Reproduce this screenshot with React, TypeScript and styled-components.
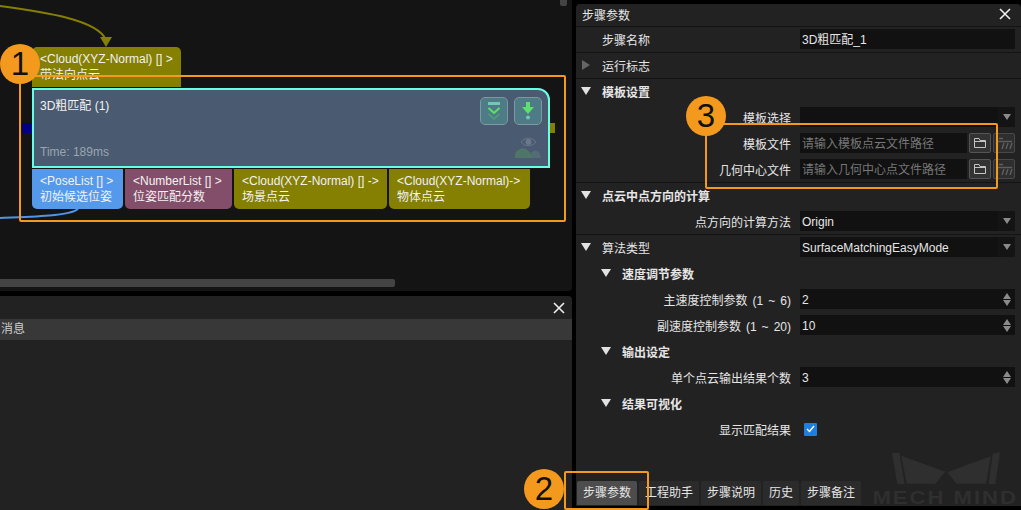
import React from "react";
import styled, { createGlobalStyle } from "styled-components";

const orange = "#f39a1e";
const olive = "#857f02";

const GlobalStyle = createGlobalStyle`
  html, body {
    margin: 0;
    padding: 0;
    background: #000;
    overflow: hidden;
  }
  * {
    box-sizing: border-box;
  }
  body {
    font-family: "Liberation Sans", "Noto Sans CJK SC", sans-serif;
    font-size: 12px;
    color: #e6e6e6;
  }
`;

const Page = styled.div`
  position: relative;
  width: 1021px;
  height: 510px;
  display: flex;
  gap: 4px;
  overflow: hidden;
`;

const LeftColumn = styled.div`
  width: 572px;
  display: flex;
  flex-direction: column;
  gap: 5px;
`;

const Canvas = styled.div`
  position: relative;
  height: 291px;
  background: #141414;
  border-radius: 0 0 4px 0;
  overflow: hidden;
`;

const Wires = styled.svg`
  position: absolute;
  left: 0;
  top: 0;
`;

const HScroll = styled.div`
  position: absolute;
  left: 0;
  top: 279px;
  width: 395px;
  height: 8px;
  background: #444;
  border-radius: 0 2px 2px 0;
`;

const VScroll = styled.div`
  position: absolute;
  left: 560px;
  top: 0;
  width: 7px;
  height: 6px;
  background: #444;
  border-radius: 0 0 2px 2px;
`;

const NodeGroup = styled.div`
  position: absolute;
  left: 32px;
  top: 47px;
  width: 523px;
  display: flex;
  flex-direction: column;
`;

const Port = styled.div<{ $bg: string; $w: number; $top?: boolean }>`
  width: ${(p) => p.$w}px;
  height: 40px;
  padding: 4px 0 0 8px;
  background: ${(p) => p.$bg};
  border-radius: ${(p) => (p.$top ? "5px 5px 0 0" : "0 0 5px 5px")};
  line-height: 16px;
  color: #f2f2f2;
  white-space: nowrap;
`;

const Node = styled.div`
  position: relative;
  width: 518px;
  height: 80px;
  margin: 1px 0;
  padding: 7px 6px 6px 6px;
  display: flex;
  justify-content: space-between;
  background: #4a5a70;
  border: 2px solid #66ffe6;
  border-radius: 0 12px 0 0;
`;

const NodeText = styled.div`
  padding-top: 1px;
  display: flex;
  flex-direction: column;
  justify-content: space-between;
  line-height: 16px;
`;

const NodeTitle = styled.div`
  color: #f2f2f2;
`;

const NodeTime = styled.div`
  color: #9aa5b3;
`;

const NodeTools = styled.div`
  display: flex;
  flex-direction: column;
  align-items: flex-end;
  gap: 7px;
`;

const ToolRow = styled.div`
  display: flex;
  gap: 6px;
`;

const ToolButton = styled.div`
  width: 28px;
  height: 28px;
  display: flex;
  align-items: center;
  justify-content: center;
  background: #4e7b85;
  border: 1px solid #7a9aa2;
  border-radius: 5px;
`;

const SidePin = styled.div<{ $bg: string; $left: number; $w: number }>`
  position: absolute;
  left: ${(p) => p.$left}px;
  top: 33px;
  width: ${(p) => p.$w}px;
  height: 10px;
  background: ${(p) => p.$bg};
`;

const PortRow = styled.div`
  display: flex;
  gap: 2px;
`;

const MessagePanel = styled.div`
  flex: 1;
  background: #222;
  border-radius: 0 4px 0 0;
`;

const MessageTop = styled.div`
  height: 23px;
  display: flex;
  align-items: center;
  justify-content: flex-end;
  padding-right: 7px;
`;

const MessageHead = styled.div`
  height: 21px;
  padding-left: 1px;
  line-height: 20px;
  background: #383838;
  color: #cfcfcf;
`;

const Panel = styled.div`
  position: relative;
  width: 445px;
  height: 502px;
  margin-top: 4px;
  display: flex;
  flex-direction: column;
  background: #222;
  border-radius: 4px 4px 0 0;
`;

const PanelHead = styled.div`
  height: 22px;
  padding: 0 10px 2px 6px;
  display: flex;
  align-items: center;
  justify-content: space-between;
  color: #e6e6e6;
`;

const Row = styled.div<{ $line?: boolean }>`
  height: 26px;
  display: flex;
  align-items: center;
  padding-right: 6px;
  border-top: 1px solid ${(p) => (p.$line ? "#141414" : "transparent")};
  border-bottom: 1px solid transparent;
`;

const Label = styled.div`
  width: 215px;
  flex: none;
  text-align: right;
  white-space: nowrap;
  word-spacing: 1.7px;
  color: #e6e6e6;
`;

const PlainLabel = styled.div`
  width: 215px;
  flex: none;
  padding-left: 26px;
  color: #e6e6e6;
`;

const Heading = styled.div<{ $level: number; $strong?: boolean }>`
  width: 215px;
  flex: none;
  display: flex;
  align-items: center;
  padding-left: ${(p) => 5 + p.$level * 20}px;
  font-weight: ${(p) => (p.$strong ? 700 : 400)};
  color: #e6e6e6;
  white-space: nowrap;
`;

const Caret = styled.span<{ $closed?: boolean }>`
  width: 21px;
  flex: none;
  display: flex;
  &::before {
    content: "";
    ${(p) =>
      p.$closed
        ? `margin-left: 1px;
           border-left: 8px solid #666;
           border-top: 5.5px solid transparent;
           border-bottom: 5.5px solid transparent;`
        : `border-top: 8px solid #e2e2e2;
           border-left: 5px solid transparent;
           border-right: 5px solid transparent;`}
  }
`;

const Field = styled.div<{ $muted?: boolean }>`
  position: relative;
  flex: 1;
  min-width: 0;
  height: 20px;
  margin-left: 9px;
  padding-left: 2px;
  line-height: 22px;
  background: #111;
  color: ${(p) => (p.$muted ? "#777" : "#e6e6e6")};
  white-space: nowrap;
`;

const SelectArrow = styled.span`
  position: absolute;
  right: 0;
  top: 0;
  width: 17px;
  height: 20px;
  display: flex;
  align-items: center;
  justify-content: center;
  background: #141414;
  &::before {
    content: "";
    border-top: 6px solid #8a8a8a;
    border-left: 4px solid transparent;
    border-right: 4px solid transparent;
  }
`;

const Spin = styled.span`
  position: absolute;
  right: 4px;
  top: 4px;
  display: flex;
  flex-direction: column;
  gap: 1px;
  &::before,
  &::after {
    content: "";
    border-left: 4px solid transparent;
    border-right: 4px solid transparent;
  }
  &::before {
    border-bottom: 6px solid #8a8a8a;
  }
  &::after {
    border-top: 6px solid #8a8a8a;
  }
`;

const FileButton = styled.div<{ $off?: boolean }>`
  width: 22px;
  height: 20px;
  margin-left: 2px;
  flex: none;
  display: flex;
  align-items: center;
  justify-content: center;
  border: 1px solid ${(p) => (p.$off ? "#484848" : "#555")};
  border-radius: 2px;
  background: ${(p) => (p.$off ? "#2e2e2e" : "#333")};
`;

const CheckBox = styled.div`
  width: 13px;
  height: 13px;
  margin-left: 13px;
  display: flex;
  align-items: center;
  justify-content: center;
  background: #1e7fe0;
  border-radius: 1px;
`;

const TabBar = styled.div`
  position: relative;
  margin-top: auto;
  height: 24px;
  margin-bottom: 1px;
  padding-left: 1px;
  display: flex;
  gap: 2px;
`;

const Tab = styled.div<{ $active?: boolean; $w: number }>`
  width: ${(p) => p.$w}px;
  height: 24px;
  line-height: 24px;
  text-align: center;
  background: ${(p) => (p.$active ? "#4d4d4d" : "#2b2b2b")};
  color: #e6e6e6;
  border-radius: 2px 2px 0 0;
`;

const Watermark = styled.div`
  position: absolute;
  right: 4px;
  bottom: 1px;
  width: 144px;
  display: flex;
  flex-direction: column;
  align-items: center;
  gap: 6px;
  pointer-events: none;
`;

const WatermarkLogo = styled.svg`
  margin-left: 2px;
`;

const WatermarkText = styled.div`
  font-size: 18px;
  line-height: 14px;
  font-weight: 700;
  letter-spacing: 1.6px;
  color: #2f2f2f;
  white-space: nowrap;
  transform: scaleX(1.23);
`;

const Frame = styled.div<{ $x: number; $y: number; $w: number; $h: number }>`
  position: absolute;
  left: ${(p) => p.$x}px;
  top: ${(p) => p.$y}px;
  width: ${(p) => p.$w}px;
  height: ${(p) => p.$h}px;
  border: 2px solid ${orange};
  border-radius: 2px;
  pointer-events: none;
`;

const Badge = styled.div<{ $x: number; $y: number }>`
  position: absolute;
  left: ${(p) => p.$x - 20}px;
  top: ${(p) => p.$y - 20}px;
  width: 40px;
  height: 40px;
  border-radius: 50%;
  background: ${orange};
  color: #111;
  font-size: 33px;
  line-height: 40px;
  text-align: center;
`;

const Close = () => (
  <svg width="12" height="12" viewBox="0 0 12 12">
    <path d="M1 1L11 11M11 1L1 11" stroke="#eee" strokeWidth="1.6" />
  </svg>
);

const FolderIcon = () => (
  <svg width="14" height="12" viewBox="0 0 14 12" fill="none" stroke="#c4c4c4" strokeWidth="1">
    <path d="M1.5 10.5V1.5H6L7 3.5H12.5V10.5H1.5Z" />
    <path d="M1.5 4.5H12.5" />
  </svg>
);

const ClearIcon = () => (
  <svg width="18" height="13" viewBox="0 0 18 13" fill="none" stroke="#5e5e5e" strokeWidth="1.4">
    <path d="M4 1.5H8M1 4.5H17" />
    <path d="M2.5 12V6M7 12L9 6M11 12L13 6M15 12L17 6" />
  </svg>
);

const Section = ({ title, level, strong, closed, line, children }: {
  title: string;
  level: number;
  strong?: boolean;
  closed?: boolean;
  line?: boolean;
  children?: React.ReactNode;
}) => (
  <Row $line={line}>
    <Heading $level={level} $strong={strong}>
      <Caret $closed={closed} />
      {title}
    </Heading>
    {children}
  </Row>
);

const Select = ({ value }: { value: string }) => (
  <Field>
    {value}
    <SelectArrow />
  </Field>
);

const NumberField = ({ value }: { value: string }) => (
  <Field>
    {value}
    <Spin />
  </Field>
);

const FileRow = ({ label, hint }: { label: string; hint: string }) => (
  <Row>
    <Label>{label}</Label>
    <Field $muted>{hint}</Field>
    <FileButton>
      <FolderIcon />
    </FileButton>
    <FileButton $off>
      <ClearIcon />
    </FileButton>
  </Row>
);

const tabs = [
  { name: "步骤参数", w: 60, active: true },
  { name: "工程助手", w: 60 },
  { name: "步骤说明", w: 60 },
  { name: "历史", w: 36 },
  { name: "步骤备注", w: 60 },
];

const App = () => {
  return (
    <Page>
      <GlobalStyle />
      <LeftColumn>
        <Canvas>
          <Wires width="572" height="291">
            <path d="M0 6C45 12 98 20 106 40" fill="none" stroke={olive} strokeWidth="2" />
            <path d="M100 37H112L106 47Z" fill={olive} />
            <path d="M0 218C30 217 70 216 78 209" fill="none" stroke="#4f94e6" strokeWidth="2" />
          </Wires>
          <NodeGroup>
            <Port $bg={olive} $w={149} $top>
              &lt;Cloud(XYZ-Normal) [] &gt;
              <br />
              带法向点云
            </Port>
            <Node>
              <SidePin $bg="#000080" $left={-12} $w={10} />
              <SidePin $bg={olive} $left={516} $w={5} />
              <NodeText>
                <NodeTitle>3D粗匹配 (1)</NodeTitle>
                <NodeTime>Time: 189ms</NodeTime>
              </NodeText>
              <NodeTools>
                <ToolRow>
                  <ToolButton>
                    <svg width="14" height="20" viewBox="0 0 14 20" fill="none">
                      <rect x="1" y="1" width="12" height="3" fill="#6fc9b6" />
                      <path d="M1.5 7L7 12L12.5 7" stroke="#5fe06a" strokeWidth="2" />
                      <path d="M1.5 13L7 18L12.5 13" stroke="#4f9a7a" strokeWidth="2" />
                    </svg>
                  </ToolButton>
                  <ToolButton>
                    <svg width="12" height="18" viewBox="0 0 12 18">
                      <path d="M4 0H8V5H12L6 12L0 5H4Z" fill="#5fe06a" />
                      <circle cx="6" cy="15.5" r="2" fill="#6fc9b6" />
                    </svg>
                  </ToolButton>
                </ToolRow>
                <svg width="28" height="26" viewBox="0 0 28 26">
                  <path d="M7 10C11 5 18 5 22 10C18 15 11 15 7 10Z" fill="none" stroke="#6b788c" strokeWidth="1" />
                  <circle cx="14.5" cy="10" r="3" fill="#6b788c" />
                  <path d="M1 26V22C3 17 8 15 12 17C14 18 16 21 18 23L20 26Z" fill="#4f7568" />
                  <path d="M17 21C20 17 24 18 26 22L27 26H20Z" fill="#546c78" />
                </svg>
              </NodeTools>
            </Node>
            <PortRow>
              <Port $bg="#5599ea" $w={91}>
                &lt;PoseList [] &gt;
                <br />
                初始候选位姿
              </Port>
              <Port $bg="#824e6a" $w={107}>
                &lt;NumberList [] &gt;
                <br />
                位姿匹配分数
              </Port>
              <Port $bg={olive} $w={153}>
                &lt;Cloud(XYZ-Normal) [] -&gt;
                <br />
                场景点云
              </Port>
              <Port $bg={olive} $w={141}>
                &lt;Cloud(XYZ-Normal)-&gt;
                <br />
                物体点云
              </Port>
            </PortRow>
          </NodeGroup>
          <HScroll />
          <VScroll />
        </Canvas>
        <MessagePanel>
          <MessageTop>
            <Close />
          </MessageTop>
          <MessageHead>消息</MessageHead>
        </MessagePanel>
      </LeftColumn>

      <Panel>
        <PanelHead>
          步骤参数
          <Close />
        </PanelHead>
        <Row $line>
          <PlainLabel>步骤名称</PlainLabel>
          <Field>3D粗匹配_1</Field>
        </Row>
        <Section title="运行标志" level={0} closed line />
        <Section title="模板设置" level={0} strong line />
        <Row>
          <Label>模板选择</Label>
          <Select value="" />
        </Row>
        <FileRow label="模板文件" hint="请输入模板点云文件路径" />
        <FileRow label="几何中心文件" hint="请输入几何中心点文件路径" />
        <Section title="点云中点方向的计算" level={0} strong line />
        <Row>
          <Label>点方向的计算方法</Label>
          <Select value="Origin" />
        </Row>
        <Section title="算法类型" level={0} line>
          <Select value="SurfaceMatchingEasyMode" />
        </Section>
        <Section title="速度调节参数" level={1} strong />
        <Row>
          <Label>主速度控制参数 (1 ~ 6)</Label>
          <NumberField value="2" />
        </Row>
        <Row>
          <Label>副速度控制参数 (1 ~ 20)</Label>
          <NumberField value="10" />
        </Row>
        <Section title="输出设定" level={1} strong />
        <Row>
          <Label>单个点云输出结果个数</Label>
          <NumberField value="3" />
        </Row>
        <Section title="结果可视化" level={1} strong />
        <Row>
          <Label>显示匹配结果</Label>
          <CheckBox>
            <svg width="9" height="8" viewBox="0 0 9 8" fill="none">
              <path d="M1 4L3.5 6.5L8 1" stroke="#fff" strokeWidth="1.4" />
            </svg>
          </CheckBox>
        </Row>
        <Watermark>
          <WatermarkLogo width="112" height="33" viewBox="0 0 112 33">
            <path d="M2 1H9.3L14.7 32.3H7.3Z" fill="#2f2f2f" />
            <path d="M11.3 3.7L55.3 19.7L45.3 31.7H16.7Z" fill="#2f2f2f" />
            <path d="M100.7 4.3L57.3 20.3L66.7 31.7H96Z" fill="#2f2f2f" />
            <path d="M102.7 1.7L110 0.3L105.3 32H98.7Z" fill="#2f2f2f" />
          </WatermarkLogo>
          <WatermarkText>MECH MIND</WatermarkText>
        </Watermark>
        <TabBar>
          {tabs.map((t) => (
            <Tab key={t.name} $w={t.w} $active={t.active}>
              {t.name}
            </Tab>
          ))}
        </TabBar>
      </Panel>

      <Frame $x={19} $y={75} $w={547} $h={147} />
      <Frame $x={705} $y={123} $w={293} $h={66} />
      <Frame $x={564} $y={471} $w={85} $h={39} />
      <Badge $x={20} $y={64}>1</Badge>
      <Badge $x={544} $y={489}>2</Badge>
      <Badge $x={706} $y={116}>3</Badge>
    </Page>
  );
};

export default App;
